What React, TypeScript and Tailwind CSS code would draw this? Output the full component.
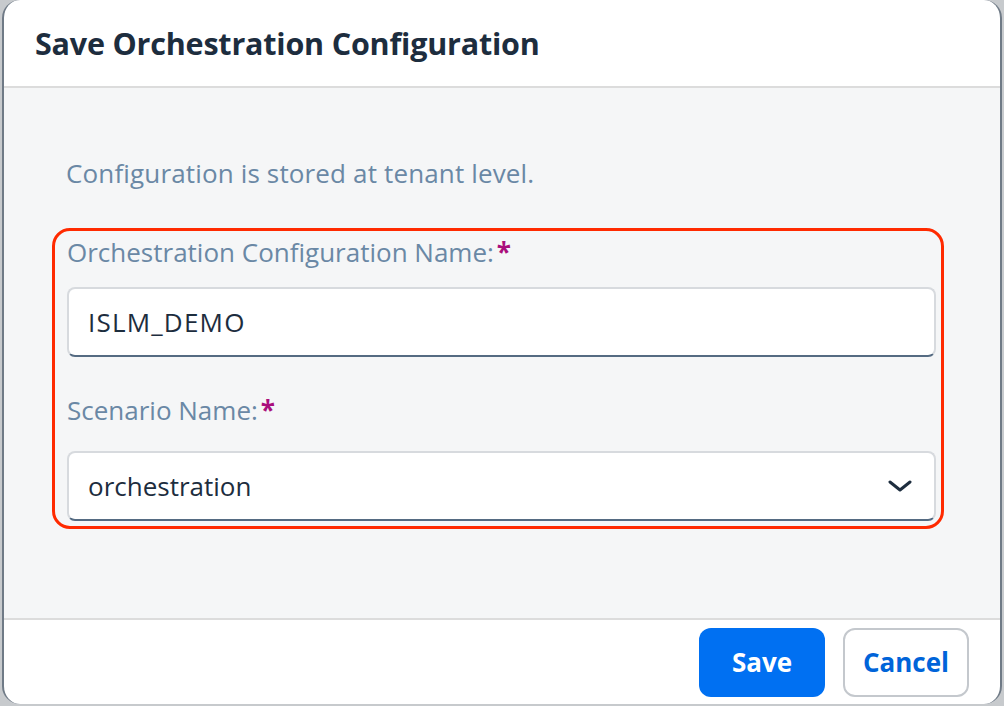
import React from "react";

const font = { fontFamily: '"Open Sans", "Liberation Sans", sans-serif' };

export default function App() {
  return (
    <div className="w-[1004px] h-[706px] bg-[#c7cacd] overflow-hidden" style={font}>
      <div className="ml-[2px] w-[1000px] h-[704px] flex flex-col bg-white rounded-[18px] border-l-2 border-r-2 border-[#6f7a86] overflow-hidden">
        <div className="h-[88px] shrink-0 flex items-center pl-[31px] border-b-2 border-[#dcdcdc]">
          <h1 className="text-[30.5px] font-bold text-[#1d2d3e] tracking-[-0.2px] leading-none">Save Orchestration Configuration</h1>
        </div>
        <div className="flex-1 bg-[#f5f6f7] pt-[68px] pl-[48px] pr-[56px]">
          <p className="pl-[14px] text-[26px] tracking-[0.15px] text-[#6a88a5] leading-[34px]">Configuration is stored at tenant level.</p>
          <div className="mt-[38px] border-[3px] border-[#ff2a00] rounded-[18px] pl-[12px] pr-[5px] pt-[4px] pb-[5px]">
            <label className="block text-[26px] text-[#6a88a5] leading-[34px]">
              Orchestration Configuration Name:<span className="text-[#aa0e7c] font-bold ml-[3px]">*</span>
            </label>
            <div className="mt-[18px] h-[70px] bg-white border-2 border-[#d7dade] border-b-[#556b82] rounded-[8px] flex items-center pl-[19px] text-[26px] tracking-[1.2px] text-[#1d2d3e]">
              ISLM_DEMO
            </div>
            <label className="block mt-[36px] text-[26px] text-[#6a88a5] leading-[34px]">
              Scenario Name:<span className="text-[#aa0e7c] font-bold ml-[3px]">*</span>
            </label>
            <div className="mt-[24px] h-[70px] bg-white border-2 border-[#d7dade] border-b-[#556b82] rounded-[8px] flex items-center justify-between pl-[19px] pr-[22px] text-[26px] text-[#1d2d3e]">
              <span>orchestration</span>
              <svg width="24" height="14" viewBox="0 0 24 14" fill="none">
                <path d="M2 3 L12 11 L22 3" stroke="#1d2d3e" strokeWidth="3" strokeLinecap="round" strokeLinejoin="round" />
              </svg>
            </div>
          </div>
        </div>
        <div className="h-[86px] shrink-0 border-t-2 border-[#dcdcdc] flex items-center justify-end gap-[18px] pr-[31px]">
          <button className="w-[126px] h-[69px] rounded-[12px] bg-[#0070f2] text-white text-[26px] font-bold">Save</button>
          <button className="w-[126px] h-[69px] rounded-[12px] bg-white border-2 border-[#c4c8cd] text-[#0064d9] text-[26px] font-bold">Cancel</button>
        </div>
      </div>
    </div>
  );
}
